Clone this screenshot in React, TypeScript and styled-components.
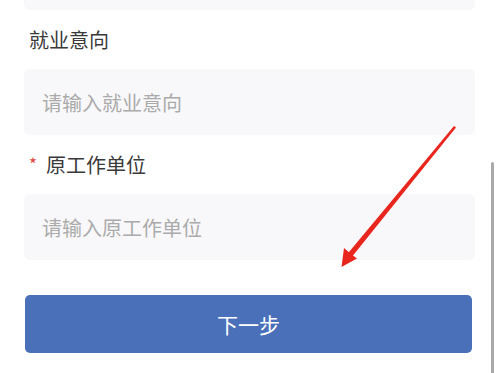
import styled, { createGlobalStyle } from 'styled-components';

const GlobalStyle = createGlobalStyle`
  html, body {
    margin: 0;
    padding: 0;
    background: #ffffff;
  }

  body {
    font-family: "Noto Sans CJK SC", "Noto Sans", sans-serif;
  }
`;

type Field = {
  label: string;
  placeholder: string;
  required?: boolean;
};

const fields: Field[] = [
  { label: '就业意向', placeholder: '请输入就业意向' },
  { label: '原工作单位', placeholder: '请输入原工作单位', required: true },
];

function Arrow() {
  return (
    <ArrowSvg width="497" height="373" viewBox="0 0 497 373">
      <path
        d="M454 126 L456 127.5 L351 258 L346.5 255 Z"
        fill="#e8261d"
      />
      <path d="M341.5 267 L344 248 L351 254 L357 258.5 Z" fill="#e8261d" />
    </ArrowSvg>
  );
}

export default function App() {
  return (
    <>
      <GlobalStyle />
      <Viewport>
        <Content>
          <InputBox />
          {fields.map((field) => (
            <FieldGroup key={field.label}>
              <Label>
                {field.required && <Star>*</Star>}
                {field.label}
              </Label>
              <InputBox>
                <Input placeholder={field.placeholder} />
              </InputBox>
            </FieldGroup>
          ))}
          <NextButton type="button">下一步</NextButton>
        </Content>
        <Scrollbar />
        <Arrow />
      </Viewport>
    </>
  );
}

const Viewport = styled.div`
  position: relative;
  width: 497px;
  height: 373px;
  overflow: hidden;
  background: #ffffff;
`;

const Content = styled.div`
  display: flex;
  flex-direction: column;
  margin-top: -56px;
  padding: 0 22px 0 24px;
`;

const FieldGroup = styled.div`
  display: flex;
  flex-direction: column;
`;

const Label = styled.div`
  display: flex;
  align-items: center;
  gap: 9px;
  height: 59px;
  padding-left: 5px;
  font-size: 20px;
  color: #3a3a3a;
`;

const Star = styled.span`
  color: #e0463c;
  font-size: 17px;
  margin-top: -2px;
`;

const InputBox = styled.div`
  display: flex;
  align-items: center;
  height: 66px;
  background: #f8f8fa;
  border-radius: 6px;
`;

const Input = styled.input`
  flex: 1;
  border: none;
  outline: none;
  background: transparent;
  padding: 0 18px;
  font-family: "Noto Sans CJK SC", "Noto Sans", sans-serif;
  font-size: 20px;
  color: #333333;

  &::placeholder {
    color: #ababab;
  }
`;

const NextButton = styled.button`
  margin: 35px 3px 0 1px;
  height: 58px;
  border: none;
  border-radius: 5px;
  background: #4a70b9;
  color: #ffffff;
  font-family: "Noto Sans CJK SC", "Noto Sans", sans-serif;
  font-size: 21px;
`;

const Scrollbar = styled.div`
  position: absolute;
  top: 162px;
  right: 3px;
  width: 3px;
  height: 220px;
  border-radius: 2px;
  background: #a9a9a9;
`;

const ArrowSvg = styled.svg`
  position: absolute;
  inset: 0;
  pointer-events: none;
`;
